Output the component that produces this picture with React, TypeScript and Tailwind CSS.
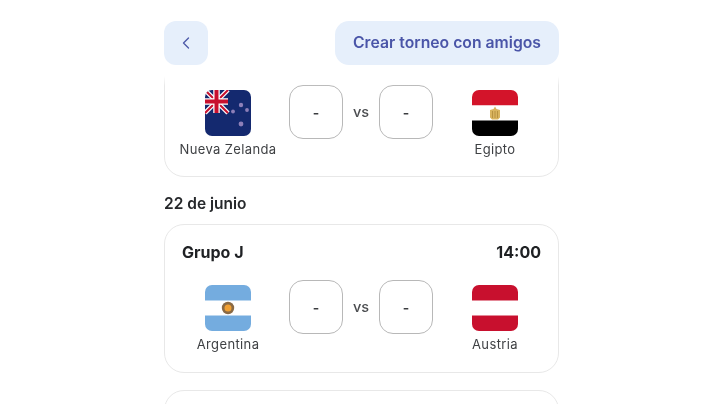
import { ChevronLeft } from "lucide-react";
import type { ReactNode } from "react";

function FlagFrame({ children }: { children: ReactNode }) {
  return (
    <svg width="46" height="46" viewBox="0 0 46 46" className="shrink-0 rounded-[7px]">
      {children}
    </svg>
  );
}

function NewZealand() {
  return (
    <FlagFrame>
      <rect width="46" height="46" fill="#14296f" />
      <path d="M0 0L23 23M23 0L0 23" stroke="#fff" strokeWidth="4.5" />
      <path d="M0 0L23 23M23 0L0 23" stroke="#c8102e" strokeWidth="2" />
      <path d="M11.5 0V23M0 11.5H23" stroke="#fff" strokeWidth="6.5" />
      <path d="M11.5 0V23M0 11.5H23" stroke="#c8102e" strokeWidth="4" />
      <circle cx="36" cy="15" r="2.2" fill="#8d7fb8" />
      <circle cx="42" cy="20" r="1.9" fill="#8d7fb8" />
      <circle cx="28" cy="21.5" r="1.9" fill="#8d7fb8" />
      <circle cx="36" cy="34" r="2.4" fill="#8d7fb8" />
    </FlagFrame>
  );
}

function Egypt() {
  return (
    <FlagFrame>
      <rect width="46" height="15.5" fill="#d3142a" />
      <rect y="15.5" width="46" height="15" fill="#fff" />
      <rect y="30.5" width="46" height="15.5" fill="#000" />
      <path d="M23 16.5l1.5 2.5 3.5 1v7.5l-2 2h-6l-2-2V20l3.5-1z" fill="#d9b45f" />
      <path d="M20.5 21v7M23 21v7M25.5 21v7" stroke="#b08a3a" strokeWidth="0.8" />
    </FlagFrame>
  );
}

function Argentina() {
  return (
    <FlagFrame>
      <rect width="46" height="46" fill="#74acdf" />
      <rect y="15.5" width="46" height="15" fill="#fff" />
      <circle cx="23" cy="23" r="6.2" fill="#8a6a45" />
      <circle cx="23" cy="23" r="3.5" fill="#f1a033" />
    </FlagFrame>
  );
}

function Austria() {
  return (
    <FlagFrame>
      <rect width="46" height="46" fill="#c8102e" />
      <rect y="15.5" width="46" height="15" fill="#fff" />
    </FlagFrame>
  );
}

function Team({ flag, name }: { flag: ReactNode; name: string }) {
  return (
    <div className="flex w-[92px] flex-col items-center gap-[3px]">
      {flag}
      <span className="whitespace-nowrap text-[13px] leading-[20px] tracking-[0.38px] text-[#3f4144]">
        {name}
      </span>
    </div>
  );
}

function ScoreBox() {
  return (
    <div className="flex h-[54px] w-[54px] items-center justify-center rounded-[14px] border-[1.5px] border-[#b8b8b8] text-[14px] font-semibold text-[#3a3c3f]">
      -
    </div>
  );
}

function MatchRow({
  home,
  away,
}: {
  home: { flag: ReactNode; name: string };
  away: { flag: ReactNode; name: string };
}) {
  return (
    <div className="flex items-start justify-between">
      <div className="pt-[5px]">
        <Team {...home} />
      </div>
      <div className="mr-px flex items-center">
        <ScoreBox />
        <span className="w-[36px] text-center text-[14.5px] font-medium text-[#4b4d50]">vs</span>
        <ScoreBox />
      </div>
      <div className="pt-[5px]">
        <Team {...away} />
      </div>
    </div>
  );
}

export default function App() {
  return (
    <div className="h-[404px] w-[720px] overflow-hidden bg-white font-['Inter',sans-serif] blur-[0.35px]">
      <div className="ml-[164px] flex h-full w-[395px] flex-col">
        <header className="flex items-center justify-between pt-[21px] pb-[11px]">
          <button className="flex h-[44px] w-[44px] items-center justify-center rounded-[12px] bg-[#e6effb] text-[#4d5aa8]">
            <ChevronLeft size={20} strokeWidth={1.6} />
          </button>
          <button className="flex h-[44px] w-[224px] items-center justify-center rounded-[14px] bg-[#e6effb] text-[15.75px] font-semibold text-[#4a55a8]">
            Crear torneo con amigos
          </button>
        </header>

        <div className="relative min-h-0 flex-1 overflow-hidden">
          <div className="absolute inset-x-0 top-0 h-[10px] bg-gradient-to-b from-white to-transparent" />
          <section className="-mt-[48px] h-[149px] rounded-[20px] border-[1.5px] border-[#e8e8e8] px-[17px] pt-[56px]">
            <MatchRow
              home={{ flag: <NewZealand />, name: "Nueva Zelanda" }}
              away={{ flag: <Egypt />, name: "Egipto" }}
            />
          </section>

          <h2 className="mt-[17px] mb-[10px] text-[15.5px] leading-[20px] font-semibold text-[#26282b]">
            22 de junio
          </h2>

          <section className="h-[149px] rounded-[20px] border-[1.5px] border-[#e8e8e8] px-[17px] pt-[16px]">
            <div className="mb-[17px] flex h-[22px] items-center justify-between text-[16px] font-bold text-[#1f2124]">
              <span>Grupo J</span>
              <span>14:00</span>
            </div>
            <MatchRow
              home={{ flag: <Argentina />, name: "Argentina" }}
              away={{ flag: <Austria />, name: "Austria" }}
            />
          </section>

          <section className="mt-[17px] h-[149px] rounded-[20px] border-[1.5px] border-[#e8e8e8]" />
        </div>
      </div>
    </div>
  );
}
